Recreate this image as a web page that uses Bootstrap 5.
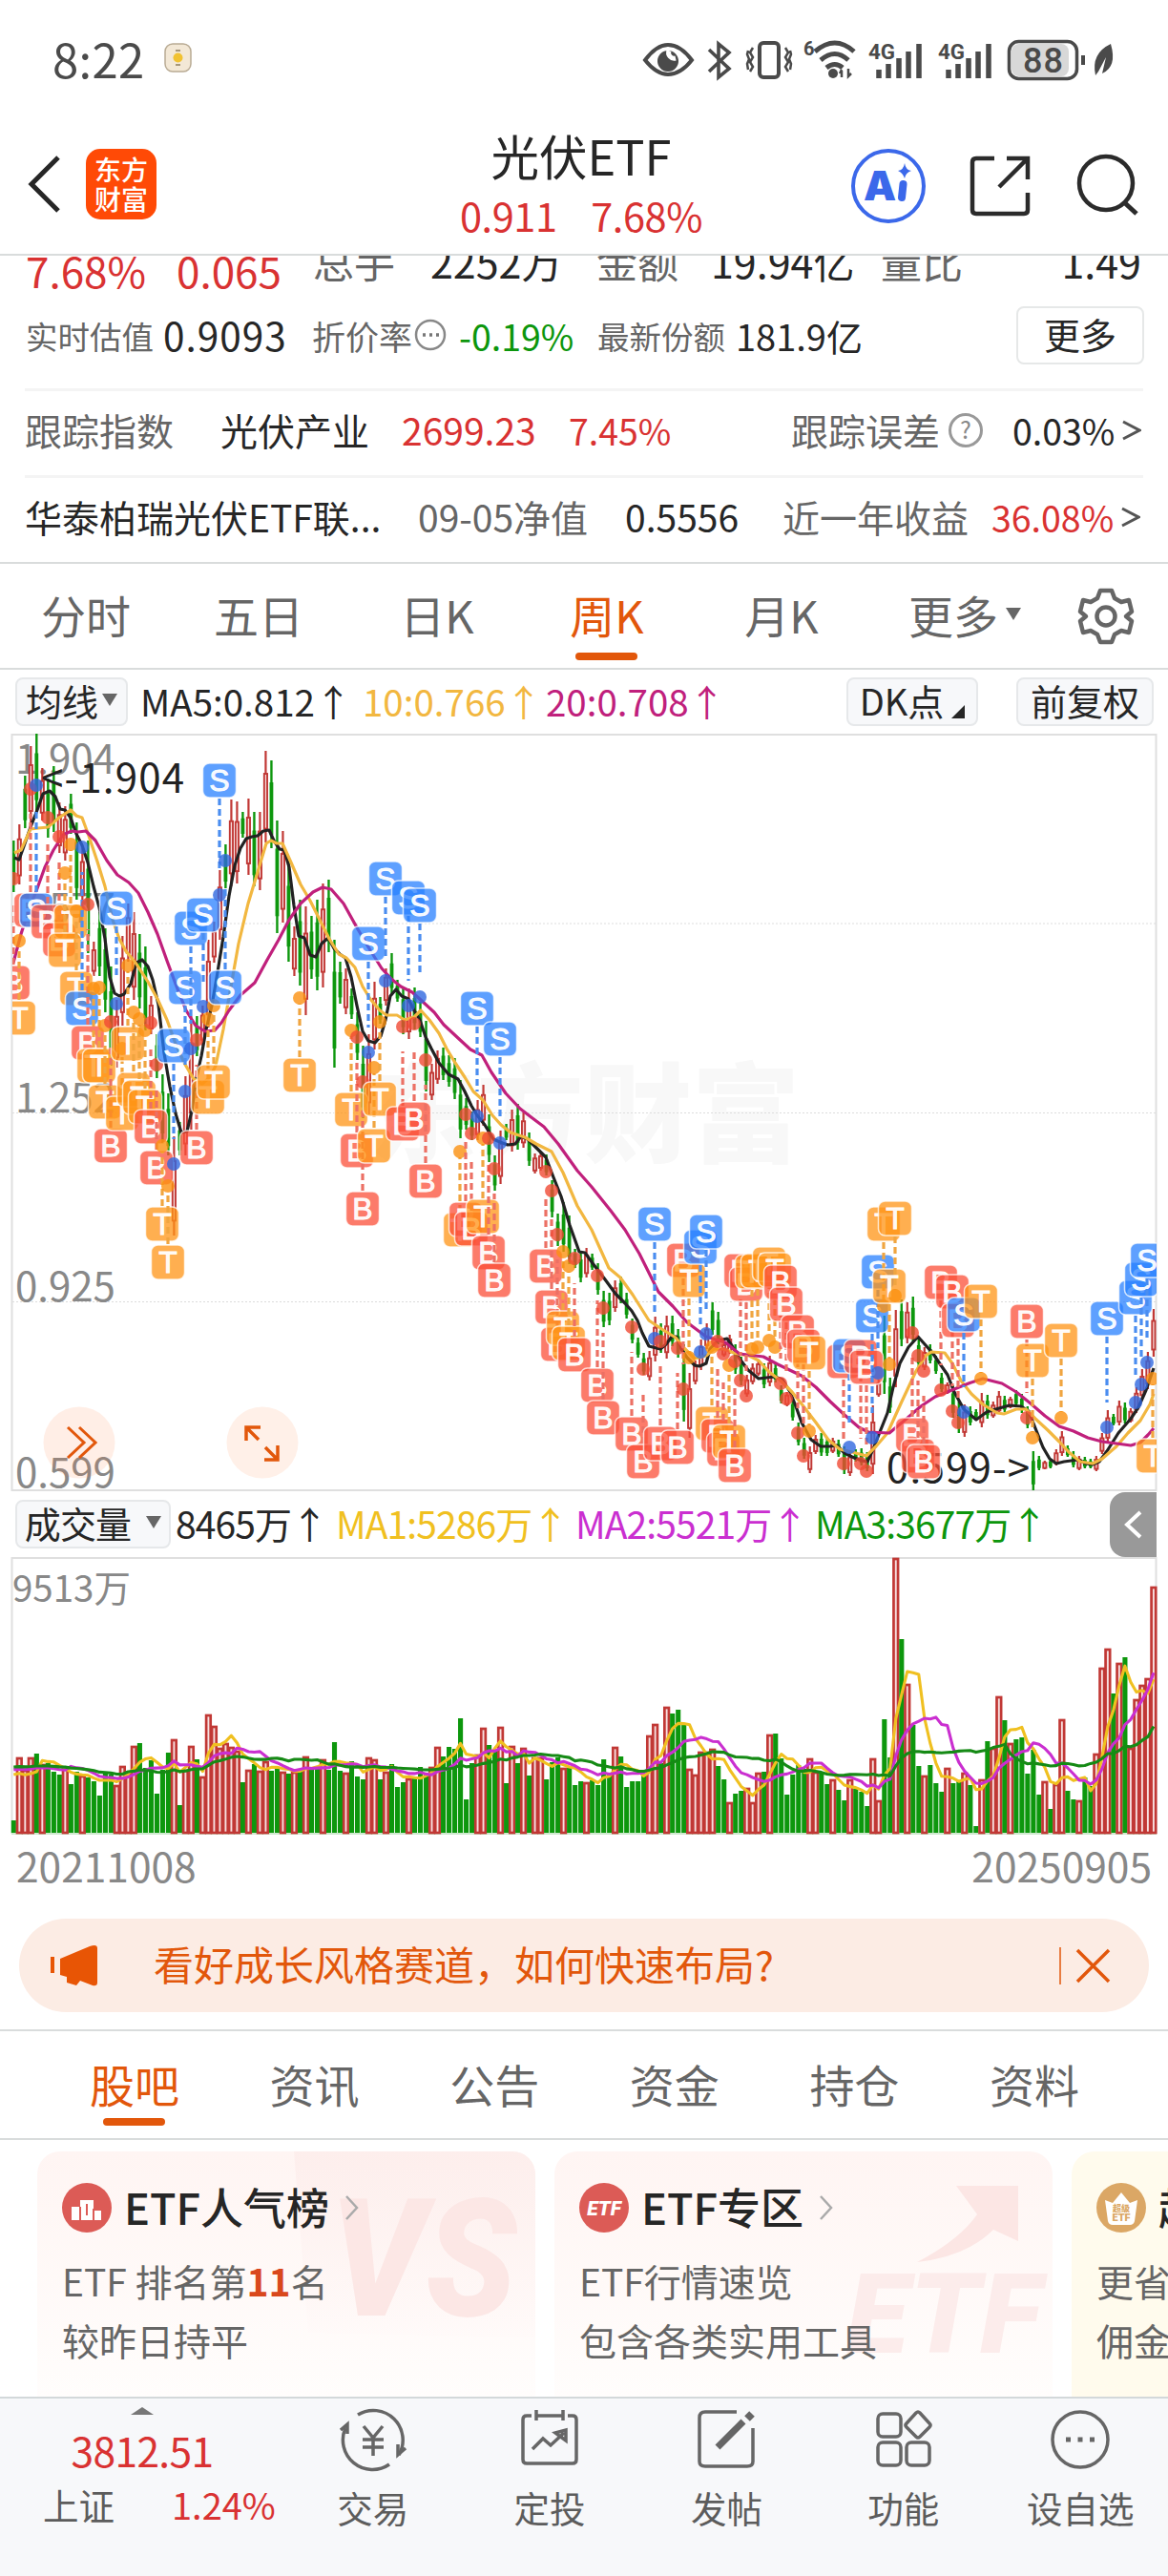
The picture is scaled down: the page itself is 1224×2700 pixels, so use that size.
<!DOCTYPE html>
<html lang="zh-CN">
<head>
    <meta charset="UTF-8">
    <meta name="viewport" content="width=device-width, initial-scale=1.0">
    <title>光伏ETF</title>
    <link rel="stylesheet" href="https://cdn.jsdelivr.net/npm/bootstrap@5.3.3/dist/css/bootstrap.min.css">
    <style>
        body {
            font-family: "Noto Sans CJK SC", "Noto Sans", sans-serif;
            color: #262626;
            font-size: 39px;
            line-height: 1;
            overflow-x: hidden;
        }
        svg { display: block; flex: none; }
        .page { width: 1224px; height: 2700px; overflow: hidden; background: #fff; }
        .red { color: #d93232; }
        .green { color: #0c960c; }
        .grey { color: #666; }
        .orange { color: #e2570b; }
        .cells { display: grid; align-items: center; white-space: nowrap; }
        .cells > * { min-width: 0; }

        .statusbar { height: 104px; padding: 20px 52px 0 55px; color: #4a4a4a; }
        .clock { font-size: 49px; letter-spacing: .3px; }
        .sys-icons { margin-top: 20px; }

        .topbar { height: 164px; border-bottom: 2px solid #d9dcdc; padding: 0 30px 0 28px; }
        .logo { width: 74px; height: 74px; border-radius: 15px; background: #ff4a06; color: #fff; font-size: 28px; line-height: 31px; font-weight: 500; }
        .topbar-title { font-size: 50.5px; line-height: 62px; padding-top: 18px; }
        .topbar-sub { font-size: 41.5px; line-height: 64px; letter-spacing: -.4px; }

        .quote { height: 139px; overflow: hidden; }
        .quote-a { height: 60px; margin-top: -27px; padding-left: 27px; font-size: 43px; grid-template-columns: 158px 143px 123px 174px 120px 178px 1fr; }
        .quote-a .change { font-size: 44px; padding-top: 20px; }
        .quote-b { height: 107px; padding: 0 0 6px 27px; grid-template-columns: 144px 156px 107px 47px 145px 145px 294px 1fr; }
        .label-s { font-size: 33.5px; }
        .more-btn { width: 134px; height: 61px; border: 2px solid #e6e8e8; border-radius: 8px; font-size: 38px; padding-bottom: 3px; }
        .fund-row { height: 91px; margin: 0 26px; padding-bottom: 7px; border-top: 3px solid #f4f4f4; }
        .fund-a { grid-template-columns: 205px 190px 175px 233px 163px 69px 115px 1fr; }
        .fund-b { grid-template-columns: 412px 217px 165px 219px 136px 1fr; }

        .period { height: 113px; border-top: 2px solid #d9dcdc; border-bottom: 2px solid #d9dcdc; font-size: 47px; grid-template-columns: 180px 182px 192px 164px 202px 182px 114px; text-align: center; color: #666; }
        .period > span { padding-bottom: 4px; }
        .tab-on { color: #e2570b; position: relative; }
        .tab-on::after { content: ""; position: absolute; left: 50%; bottom: -21px; width: 65px; height: 8px; margin-left: -33px; border-radius: 4px; background: #e2570b; }

        .chip { height: 51px; background: #f7f8fa; border: 2px solid #e6e8ea; border-radius: 8px; font-size: 38px; padding-bottom: 4px; }
        .ma-row { height: 67px; padding-left: 16px; font-size: 38.5px; grid-template-columns: 131px 233px 192px 315px 178px 1fr; }
        .ma-row > span:not(.chip), .vol-row > span:not(.chip):not(.drawer) { padding-bottom: 3px; }
        .vol-row { height: 69px; padding-left: 16px; font-size: 39px; letter-spacing: -.9px; grid-template-columns: 168px 168px 251px 251px 309px 1fr; }
        .drawer { height: 68px; width: 49px; background: #999; border-radius: 16px 0 0 16px; }
        .dates { height: 78px; padding: 0 17px 16px; font-size: 42.5px; color: #888; }

        .notice { height: 98px; margin: 9px 20px 0; border-radius: 49px; background: #fcece4; font-size: 42px; }
        .boards { height: 116px; margin-top: 18px; border-top: 2px solid #d9dcdc; border-bottom: 2px solid #d9dcdc; padding: 0 0 4px 94px; grid-template-columns: repeat(6, 188.6px); font-size: 47px; color: #666; }
        .boards .tab-on { width: 94px; }

        .promos { height: 269px; padding: 12px 0 0 39px; gap: 20px; overflow: hidden; }
        .promo { flex: none; width: 522px; height: 257px; border-radius: 24px 24px 0 0; background: linear-gradient(#fff5f3, #fffdfc); padding: 29px 26px 0; position: relative; overflow: hidden; font-size: 39px; color: #666; }
        .promo.gold { background: #fffbed; padding-left: 26px; }
        .promo > div { position: relative; white-space: nowrap; }
        .promo h2 { font-size: 45px; font-weight: 500; margin: 0 0 0 13px; padding-bottom: 3px; color: #262626; }
        .promo-line { height: 62px; line-height: 60px; }
        .promo .ghost { position: absolute; right: 0; top: 0; }

        .dock { height: 189px; border-top: 2px solid #d3d8da; background: #f7f8fa; font-size: 37.5px; color: #5c5c5c; grid-template-columns: 298px repeat(5, 185.4px); align-items: start; text-align: center; }
        .dock svg { margin: 0 auto; }
        .dock-label { padding-top: 5px; }
    </style>
</head>
<body>
<div class="page d-flex flex-column">

    <div class="statusbar d-flex align-items-start justify-content-between flex-shrink-0">
        <div class="d-flex align-items-center">
            <span class="clock pt-3">8:22</span>
            <svg class="ms-3 mt-3" width="30" height="32" viewBox="-5 0 30 32" overflow="visible"><rect x="1" y="1" width="27" height="29" rx="8" fill="#f3e8d6" stroke="#b9ab94" stroke-width="1.5"/><circle cx="14.500" cy="15.500" r="5" fill="#f1c232"/><path d="M12 8h5M12 23h5" stroke="#8d7c5c" stroke-width="1.500"/></svg>
        </div>
        <svg class="sys-icons" width="500" height="48" viewBox="672 40 500 48" fill="none" stroke="#4a4a4a" stroke-width="4">
            <path d="M676 63Q688 47 700 47Q713 47 725 63Q713 78 700 78Q688 78 676 63Z"/>
            <circle cx="700" cy="64" r="11" fill="#4a4a4a" stroke="none"/><path d="M701 53a6 6 0 0 0 7 8" stroke="#fff" stroke-width="5"/>
            <path d="M743 52L764 72L753 81V46L764 55L743 75" stroke-width="3.600"/>
            <rect x="796" y="45" width="20" height="36" rx="4"/>
            <path d="M789 50l-3 5 3 5-3 5 3 5-3 5M784 53l-1 4 2 5-2 5 1 6M823 50l3 5-3 5 3 5-3 5 3 5M828 53l1 4-2 5 2 5-1 6" stroke-width="2.500"/>
            <path d="M854 54Q875 36 895 54M860 63Q875 50 889 63M866 71Q875 64 883 71" stroke-width="5"/>
            <circle cx="873" cy="77" r="5" fill="#4a4a4a" stroke="none"/>
            <path d="M882 74v7M880 77l2-4M889 72v8l3-3" stroke-width="2.500"/>
            <path d="M921 82V73M931 82V67M942 82V61M952 82V54M963 82V46" stroke-width="5.500"/>
            <path d="M994 82V73M1004 82V67M1015 82V61M1025 82V54M1036 82V46" stroke-width="5.500"/>
            <rect x="1060" y="46" width="60" height="34" rx="8" fill="#d8d8d8" stroke="none"/>
            <rect x="1057.500" y="43.500" width="71" height="39" rx="10" stroke-width="3.500"/>
            <path d="M1135 58v10" stroke-width="4"/>
            <path d="M1148 79Q1143 56 1164 46Q1171 70 1155 77L1159 60L1151 75Z" fill="#4a4a4a" stroke="none"/>
            <g fill="#4a4a4a" stroke="none" font-size="22" font-weight="700" font-family="Roboto">
                <text x="842" y="58" font-size="20">6</text>
                <text x="910" y="62" textLength="28" lengthAdjust="spacingAndGlyphs">4G</text>
                <text x="983" y="62" textLength="28" lengthAdjust="spacingAndGlyphs">4G</text>
                <text x="1072" y="76" font-size="36" font-weight="500" textLength="42">88</text>
            </g>
        </svg>
    </div>

    <header class="topbar d-flex align-items-center justify-content-between flex-shrink-0">
        <div class="d-flex align-items-center" style="width:300px">
            <svg class="mt-3" width="38" height="64" viewBox="0 0 38 64"><path d="M33 4L5 32L33 60" fill="none" stroke="#262626" stroke-width="5"/></svg>
            <div class="logo mt-3 ms-4 d-flex flex-column justify-content-center text-center"><span>东方</span><span>财富</span></div>
        </div>
        <div class="text-center">
            <div class="topbar-title">光伏ETF</div>
            <div class="topbar-sub red">0.911&nbsp;&nbsp; &nbsp;7.68%</div>
        </div>
        <svg class="mt-3" width="304" height="84" viewBox="888 151 304 84" fill="none" stroke="#2b2b2b" stroke-width="4.500">
            <circle cx="929" cy="195" r="37" stroke="#3b68ea" stroke-width="4"/>
            <text x="903" y="210" font-size="43" font-weight="900" fill="#3b68ea" stroke="none" font-family="Inter">A</text>
            <path d="M944.500 193L943 207" stroke="#3b68ea" stroke-width="8" stroke-linecap="round"/>
            <path d="M946 171q1 7 7 8q-6 2-7 8q-2-6-7-8q6-1 7-8Z" fill="#3b68ea" stroke="none"/>
            <path d="M1040 166H1021Q1017 166 1017 170V220Q1017 224 1021 224H1071Q1075 224 1075 220V202M1045 196L1074 167M1053 166H1075V188"/>
            <circle cx="1157" cy="192" r="28"/><path d="M1176 212L1189 224" stroke-width="5"/>
        </svg>
    </header>

    <section class="quote flex-shrink-0">
        <div class="quote-a cells">
            <span class="change red">7.68%</span><span class="change red">0.065</span>
            <span class="grey">总手</span><span>2252万</span>
            <span class="grey">金额</span><span>19.94亿</span>
            <span class="d-flex justify-content-between pe-4"><span class="grey">量比</span><span class="pe-1">1.49</span></span>
        </div>
        <div class="quote-b cells">
            <span class="grey label-s">实时估值</span><span style="font-size:40.5px;letter-spacing:1px">0.9093</span>
            <span class="grey" style="font-size:35px">折价率</span>
            <svg width="36" height="36" viewBox="0 0 36 36"><circle cx="17" cy="17" r="15" fill="none" stroke="#888" stroke-width="2.500"/><path d="M9 17h3M16 17h3M23 17h3" stroke="#777" stroke-width="3.500"/></svg>
            <span class="green" style="font-size:37.500px">-0.19%</span>
            <span class="grey label-s">最新份额</span><span style="font-size:38px">181.9亿</span>
            <span class="more-btn d-flex align-items-center justify-content-center">更多</span>
        </div>
    </section>

    <section class="flex-shrink-0">
        <div class="fund-row fund-a cells">
            <span class="grey">跟踪指数</span><span>光伏产业</span><span class="red">2699.23</span><span class="red" style="font-size:37.500px">7.45%</span>
            <span class="grey">跟踪误差</span>
            <svg width="40" height="40" viewBox="0 0 40 40"><circle cx="20" cy="20" r="16.500" fill="none" stroke="#999" stroke-width="3"/><text x="20" y="29" text-anchor="middle" font-size="25" fill="#888">?</text></svg>
            <span style="font-size:37.500px">0.03%</span>
            <svg width="20" height="22" viewBox="0 0 20 22"><path d="M1 2L18 11L1 20" fill="none" stroke="#555" stroke-width="3"/></svg>
        </div>
        <div class="fund-row fund-b cells">
            <span>华泰柏瑞光伏ETF联...</span><span class="grey">09-05净值</span><span>0.5556</span>
            <span class="grey">近一年收益</span><span class="red" style="font-size:37.500px">36.08%</span>
            <svg width="20" height="22" viewBox="0 0 20 22"><path d="M1 2L18 11L1 20" fill="none" stroke="#555" stroke-width="3"/></svg>
        </div>
    </section>

    <nav class="period cells flex-shrink-0">
        <span>分时</span><span>五日</span><span>日K</span><span class="tab-on">周K</span><span>月K</span>
        <span class="d-flex align-items-center justify-content-center">更多<svg class="ms-2" width="16" height="14" viewBox="0 0 16 14"><path d="M0 0H16L8 13Z" fill="#666"/></svg></span>
        <svg class="mx-auto" width="60" height="60" viewBox="-30 -30 60 60" fill="none" stroke="#666" stroke-width="4.500" stroke-linejoin="round"><path d="M-6-27H6L9-19L16-15L24-17L27-5L21 0L27 5L24 17L16 15L9 19L6 27H-6L-9 19L-16 15L-24 17L-27 5L-21 0L-27-5L-24-17L-16-15L-9-19Z"/><circle r="9.500"/></svg>
    </nav>

    <div class="ma-row cells flex-shrink-0">
        <span class="chip d-flex align-items-center justify-content-center" style="width:118px">均线<svg class="ms-1" width="16" height="14" viewBox="0 0 16 14"><path d="M0 0H16L8 13Z" fill="#666"/></svg></span>
        <span>MA5:0.812↑</span><span style="color:#f2b740">10:0.766↑</span><span style="color:#c0207c">20:0.708↑</span>
        <span class="chip d-flex align-items-center justify-content-center" style="width:138px">DK点<svg class="ms-2 mt-4" width="14" height="14" viewBox="0 0 14 14"><path d="M14 0V14H0Z" fill="#262626"/></svg></span>
        <span class="chip d-flex align-items-center justify-content-center" style="width:144px">前复权</span>
    </div>

    <svg id="kline" class="flex-shrink-0" width="1224" height="794" viewBox="0 0 1224 794"></svg>

    <div class="vol-row cells flex-shrink-0">
        <span class="chip d-flex align-items-center justify-content-center" style="width:163px">成交量<svg class="ms-3" width="16" height="14" viewBox="0 0 16 14"><path d="M0 0H16L8 13Z" fill="#666"/></svg></span>
        <span>8465万↑</span><span style="color:#f0c020">MA1:5286万↑</span><span style="color:#ca2fd0">MA2:5521万↑</span><span class="green">MA3:3677万↑</span>
        <span class="drawer d-flex align-items-center justify-content-center"><svg width="20" height="32" viewBox="0 0 20 32"><path d="M17 3L3 16L17 29" fill="none" stroke="#fff" stroke-width="4"/></svg></span>
    </div>

    <svg id="volume" class="flex-shrink-0" width="1224" height="292" viewBox="0 0 1224 292"></svg>

    <div class="dates d-flex align-items-center justify-content-between flex-shrink-0"><span>20211008</span><span>20250905</span></div>

    <div class="notice orange d-flex align-items-center flex-shrink-0">
        <svg width="141" height="98" viewBox="0 0 141 98"><path d="M33 40h4v17h-4zM43 42L74 29Q82 26 82 31V67Q82 71 77 70L64 65L60 70L50 67V61L43 59Z" fill="#e85505"/></svg>
        <span class="flex-grow-1 pb-1">看好成长风格赛道，如何快速布局?</span>
        <svg width="94" height="98" viewBox="0 0 94 98" fill="none" stroke="#e2570b"><path d="M1 30V69" stroke-width="1.500"/><path d="M19 33L52 66M52 33L19 66" stroke-width="3.500"/></svg>
    </div>

    <nav class="boards cells flex-shrink-0">
        <span class="tab-on">股吧</span><span>资讯</span><span>公告</span><span>资金</span><span>持仓</span><span>资料</span>
    </nav>

    <section class="promos d-flex flex-shrink-0">
        <div class="promo">
            <svg class="ghost" width="260" height="257" viewBox="0 0 260 257"><defs><linearGradient id="fade" x2="0" y2="1"><stop stop-color="#fdeeec"/><stop offset="1" stop-color="#fffaf9"/></linearGradient></defs><path d="M7 0H260V195L22 190Z" fill="url(#fade)"/><text x="45" y="172" font-size="172" font-weight="900" font-style="italic" font-family="Roboto" fill="#fce7e5" textLength="195" lengthAdjust="spacingAndGlyphs">VS</text></svg>
            <div class="d-flex align-items-center">
                <svg width="52" height="60" viewBox="0 0 52 60"><circle cx="26" cy="30" r="26" fill="#dc5b56"/><path d="M10 29h9V22h14v11h8V43H10Z" fill="#fff"/><path d="M26 26v12M19 29v14M33 31v12" stroke="#dc5b56" stroke-width="2"/></svg>
                <h2>ETF人气榜</h2>
                <svg class="ms-3" width="16" height="28" viewBox="0 0 16 28"><path d="M2 2L13 14L2 26" fill="none" stroke="#aaa" stroke-width="2.500"/></svg>
            </div>
            <div class="promo-line mt-3">ETF 排名第<b style="color:#d9481c">11</b>名</div>
            <div class="promo-line">较昨日持平</div>
        </div>
        <div class="promo">
            <svg class="ghost" width="230" height="257" viewBox="0 0 230 257"><path d="M88 116Q132 93 151 66L129 36H194V94L168 82Q140 110 88 116Z" fill="#fce6e4"/><text x="14" y="211" font-size="116" font-weight="900" font-style="italic" font-family="Roboto" fill="#fceceb" textLength="204" lengthAdjust="spacingAndGlyphs">ETF</text></svg>
            <div class="d-flex align-items-center">
                <svg width="52" height="60" viewBox="0 0 52 60"><circle cx="26" cy="30" r="26" fill="#dc5b56"/><text x="26" y="38" text-anchor="middle" font-size="21" font-weight="900" font-style="italic" font-family="Roboto" fill="#fff">ETF</text></svg>
                <h2>ETF专区</h2>
                <svg class="ms-3" width="16" height="28" viewBox="0 0 16 28"><path d="M2 2L13 14L2 26" fill="none" stroke="#aaa" stroke-width="2.500"/></svg>
            </div>
            <div class="promo-line mt-3">ETF行情速览</div>
            <div class="promo-line">包含各类实用工具</div>
        </div>
        <div class="promo gold">
            <div class="d-flex align-items-center">
                <svg width="52" height="60" viewBox="0 0 52 60"><circle cx="26" cy="30" r="26" fill="#dba765"/><path d="M9 22L17 25L26 14L35 25L43 22L40 44Q39 48 35 48H17Q13 48 12 44Z" fill="#fff"/><g fill="#dba765" text-anchor="middle" font-weight="900"><text x="26" y="34" font-size="9">超级</text><text x="26" y="44" font-size="11" font-family="Roboto">ETF</text></g></svg>
                <h2>超级</h2>
            </div>
            <div class="promo-line mt-3">更省</div>
            <div class="promo-line">佣金</div>
        </div>
    </section>

    <footer class="dock cells flex-shrink-0">
        <div>
            <svg width="24" height="20" viewBox="0 0 24 20"><path d="M0 17L12 9L24 17Z" fill="#777"/></svg>
            <div class="red" style="padding-top:13px;font-size:42.500px;letter-spacing:-.6px">3812.51</div>
            <div class="d-flex mt-3" style="padding-left:45px"><span style="width:135px" class="text-start">上证</span><span class="red" style="font-size:38px">1.24%</span></div>
        </div>
        <div>
            <svg width="84" height="90" viewBox="-42 -43 84 90" fill="none" stroke="#666" stroke-width="3.500"><path d="M-16-26A31 31 0 0 1 27 16M17 26A31 31 0 0 1-29-12"/><path d="M-34-10L-27-16V-6M34 9L26 16V5"/><path d="M-10-14L0-2L10-14M0-2V17M-11 0H11M-11 8H11"/></svg>
            <div class="dock-label">交易</div>
        </div>
        <div>
            <svg width="84" height="90" viewBox="-42 -43 84 90" fill="none" stroke="#666" stroke-width="3.500"><path d="M-19-25H-24Q-28-25-28-21V21Q-28 25-24 25H24Q28 25 28 21V-21Q28-25 24-25H19M-14-31V-20M14-31V-20M-14-25H14"/><path d="M-18 10L-7-1L1 6L15-7M6-7L17-10V1Z"/></svg>
            <div class="dock-label">定投</div>
        </div>
        <div>
            <svg width="84" height="90" viewBox="-42 -43 84 90" fill="none" stroke="#666" stroke-width="3.500"><path d="M11-29H-22Q-28-29-28-23V23Q-28 28-22 28H22Q28 28 28 23V-12"/><path d="M-9 8L18-19" stroke-width="7"/><path d="M22-22L27-27" stroke-width="8"/></svg>
            <div class="dock-label">发帖</div>
        </div>
        <div>
            <svg width="84" height="90" viewBox="-42 -43 84 90" fill="none" stroke="#666" stroke-width="3.500"><rect x="-27" y="-27" width="24" height="24" rx="5"/><rect x="-27" y="3" width="24" height="24" rx="5"/><rect x="3" y="3" width="24" height="24" rx="5"/><path d="M13-28Q15-30 17-28L27-17Q29-15 27-13L17-3Q15-1 13-3L3-13Q1-15 3-17Z"/></svg>
            <div class="dock-label">功能</div>
        </div>
        <div>
            <svg width="84" height="90" viewBox="-42 -43 84 90" fill="none" stroke="#666" stroke-width="3.500"><circle r="29"/><path d="M-15 0h5M-2.500 0h5M10 0h5" stroke-width="5"/></svg>
            <div class="dock-label">设自选</div>
        </div>
    </footer>
</div>

<script src="https://cdn.jsdelivr.net/npm/bootstrap@5.3.3/dist/js/bootstrap.bundle.min.js"></script>
<script>
    const RED = '#c13835', GREEN = '#0d970d';
    const barX = i => 14.3 + i * 6.003;

    // weekly candles: colour, high, low
    const candles = `g112,166 r95,158 g44,99 r13,93 g0,82 r36,91 g47,109 g34,103 r72,125 r76,133 g63,105 g93,174 r120,178 g112,230 r218,254 g187,254 g204,292 g244,348 r279,350 r212,306
r178,239 r187,279 g210,288 g223,311 r275,315 g315,361 g357,430 g377,442 r422,526 g407,442 r359,442 r296,415 g296,338 r285,327 r216,308 r197,240 r143,216 g116,162 r69,160 r71,157
g82,109 r68,148 g82,160 r82,164 r18,114 g28,120 g91,209 r102,198 g133,239 r202,254 g174,264 r181,295 g191,257 g174,269 r157,266 g153,229 g216,350 g239,283 r246,294 g267,299
g292,342 g327,403 r315,399 r260,331 g276,304 r246,285 g230,273 g258,281 g266,315 r267,320 g266,310 g281,318 g301,375 r346,384 r332,367 g329,363 g337,370 g340,383 g363,424 g382,415
g396,426 r384,426 r368,411 g399,449 g442,479 r416,472 g409,426 r394,438 g388,436 r397,434 g418,453 r440,461 r438,458 g441,463 g468,507 g503,537 g491,543 g505,556 g540,560 g543,575
r539,570 g545,562 g555,588 g584,622 g586,620 r573,606 g569,597 g586,613 g613,639 g633,654 g649,672 r647,678 r611,658 g618,649 r610,655 g610,642 g624,654 g640,721 r670,738 r657,682
r635,667 r618,645 g596,630 g606,640 r637,653 r630,650 g640,671 g653,683 r672,695 r660,682 r657,673 g660,686 r652,684 g660,680 g683,702 r690,705 g697,720 g722,746 g738,760 r747,775
r735,755 g733,757 g737,757 r738,754 g740,758 g747,776 r752,778 g750,763 g749,767 g753,773 r704,776 r677,695 g610,692 g675,712 r604,685 g593,642 r596,639 g590,637 g633,665 r643,667
g640,660 g652,671 g670,690 r680,692 g683,717 g700,733 r703,737 g705,725 g708,720 r691,727 g693,718 r700,717 r689,713 g694,711 r695,707 g688,705 g692,712 g705,728 g752,793 g757,772
r762,771 g760,770 r750,767 r731,757 g746,758 g752,769 r757,772 g758,770 g760,770 r757,773 r733,755 r709,743 g713,725 r699,725 g701,723 r707,722 r685,712 r666,698 r648,687 r603,653`.split(/\s+/);

    const ma5 = '15,130 20,132 25,118 32,98 39,80 45,63 52,60 58,66 63,79 68,80 74,88 80,105 86,117 92,135 98,160 104,182 110,215 115,255 120,272 125,275 130,273 137,262 143,240 149,237 155,244 160,258 166,284 172,335 178,370 184,398 190,418 196,417 201,395 206,360 211,338 216,310 222,285 228,250 234,213 240,170 246,138 252,120 258,110 264,108 270,107 276,102 282,101 287,112 293,121 298,122 303,140 308,180 313,212 319,214 325,232 331,234 337,220 344,214 350,225 356,231 362,235 368,255 374,285 380,312 386,322 393,324 399,317 404,300 409,275 415,268 421,275 428,278 434,290 440,300 446,318 452,330 460,345 470,357 480,362 487,375 494,390 500,400 508,410 517,425 524,428 532,431 540,430 546,422 553,425 560,432 572,444 580,465 588,485 597,515 607,543 613,544 621,555 634,572 645,587 655,597 662,605 668,615 673,628 680,642 692,645 698,640 704,632 709,632 714,645 720,654 728,662 733,663 740,660 744,645 752,636 762,634 768,643 775,655 784,667 795,676 803,675 812,674 820,677 828,690 834,705 840,722 850,740 860,747 870,747 877,746 885,754 893,758 903,762 909,763 915,750 922,732 930,712 936,685 943,660 952,643 962,632 970,641 978,650 986,662 993,672 1000,690 1010,708 1023,719 1034,711 1047,707 1058,704 1070,705 1078,710 1085,728 1093,748 1100,760 1107,765 1115,763 1130,761 1138,765 1145,766 1152,763 1160,752 1172,733 1185,718 1193,706 1201,688 1209,665';
    const ma10 = '15,125 22,122 32,100 40,99 50,98 62,88 74,80 80,86 86,88 93,107 102,134 110,160 118,195 125,215 132,228 142,240 155,260 165,278 175,300 184,325 193,345 203,362 212,367 220,360 226,348 234,310 242,265 250,220 260,178 270,145 279,115 284,112 290,115 296,115 305,135 315,158 325,175 335,195 345,215 355,231 363,235 372,245 380,265 388,278 398,290 405,295 416,295 424,300 434,297 441,290 450,300 460,314 468,330 477,345 487,360 496,375 506,384 516,400 525,410 535,418 550,423 562,430 578,438 590,460 605,495 620,520 638,560 650,570 663,588 680,615 695,625 708,633 718,645 728,655 740,652 748,645 758,645 772,650 785,652 795,657 806,669 818,678 830,690 842,705 855,722 868,740 880,750 893,753 908,757 918,747 930,733 945,700 960,668 970,652 976,648 990,649 998,660 1007,678 1018,692 1030,703 1045,712 1052,713 1065,708 1075,708 1085,718 1098,730 1110,742 1120,753 1132,763 1145,765 1155,760 1170,747 1182,733 1195,720 1205,703 1209,692';
    const ma20 = '14,240 22,210 30,185 38,165 47,140 56,122 66,106 75,102 82,103 90,102 100,112 112,133 123,148 135,156 145,167 155,187 165,210 175,238 185,265 195,290 205,306 215,312 225,311 232,303 240,290 252,274 267,261 280,237 292,216 303,195 315,178 328,166 338,161 347,163 360,178 375,205 388,227 400,246 410,257 420,265 432,271 442,280 455,292 465,305 480,319 493,331 505,337 515,355 530,377 545,393 558,403 570,412 585,430 605,458 620,475 640,500 655,520 670,545 690,585 705,600 720,617 740,632 760,638 775,650 800,653 815,661 840,673 855,685 870,700 885,714 900,727 910,732 932,733 950,718 965,705 980,695 1000,687 1015,681 1030,676 1050,681 1065,690 1080,702 1095,715 1110,726 1125,731 1140,738 1155,742 1185,746 1195,743 1203,735 1209,728';

    // trade signals: letter + x, badge y, dot y
    const signals = `B14,261,152 B32,185,58 T20,298,217 S38,185,54 B50,197,88 B62,216,108 T74,197,116 T68,227,146 T80,267,186 S86,288,119 B92,324,179 T98,348,267 T104,348,266 T110,386,306 B116,432,302 S122,183,283
T128,398,330 T134,325,243 T140,373,292 T146,381,299 T152,391,311 B158,412,303 B164,455,347 T170,514,432 T176,554,474 S182,327,451 S194,266,375 S200,204,330 B206,434,321 S213,190,286 T218,381,299 T224,365,285 S230,49,169 S236,266,133
T314,358,277 T368,394,311 B374,437,318 B380,498,365 S386,220,334 T392,432,350 T398,383,302 S404,152,259 B422,409,307 S428,172,285 B434,404,304 S440,180,276 B446,469,342 T482,520,438 B488,509,399 B494,519,419
S500,288,401 T506,506,424 B512,544,424 B518,573,456 S524,320,429 B572,558,459 B578,601,479 B584,640,525 T590,623,543 T596,639,558 B602,651,550 B626,683,568 B632,717,602 B662,734,622 B674,763,666
S686,514,634 B692,744,637 B710,748,644 B716,552,687 T722,573,654 S734,538,648 S740,522,629 T746,723,643 B752,736,637 B758,750,650 T764,742,662 B770,767,658 B776,563,678 B782,577,694 T788,564,645 T794,563,643
T806,556,636 T812,562,643 B818,575,681 B824,598,697 B836,627,733 B842,642,757 T848,649,731 B884,658,765 S890,652,748 B902,653,765 B908,664,773 S914,610,738 S920,564,670 T926,514,600 T932,579,661 T938,508,589
B956,735,628 B962,757,652 B968,763,668 B986,575,688 B998,585,710 B1004,615,722 S1010,609,711 T1028,595,676 B1076,616,717 T1082,657,738 T1112,636,717 S1160,613,727 S1190,591,701 S1196,572,682 S1202,552,659 T1208,757,676`.split(/\s+/);

    const badge = { S: ['#2880ff', '#4a8df0', '#2f68e0'], T: ['#ff9416', '#f0a540', '#fb9110'], B: ['#fb4f38', '#ec7064', '#f04a34'] };

    function drawKline() {
        let s = '<clipPath id="box"><rect x="13" y="0" width="1199" height="794"/></clipPath>';
        s += '<text x="386" y="440" font-size="113" font-weight="900" fill="#f8f8f8">东方财富</text>';
        for (const y of [199, 397.5, 595.5]) s += `<path d="M13 ${y}H1211" stroke="#dcdcdc" stroke-dasharray="2 2"/>`;
        s += '<rect x="12.500" y="1" width="1199" height="792" fill="none" stroke="#dfdfdf" stroke-width="2"/>';
        [['1.904', 42], ['1.577', 198], ['1.252', 397], ['0.925', 595], ['0.599', 790]].forEach(l => {
            s += `<text x="16" y="${l[1]}" font-size="42" fill="#888">${l[0]}</text>`;
        });
        s += '<g clip-path="url(#box)">';
        candles.forEach((c, i) => {
            const [hi, lo] = c.slice(1).split(',').map(Number), x = barX(i), h = lo - hi;
            const top = hi + h * .25, bot = lo - h * .15;
            if (c[0] === 'r') {
                s += `<path d="M${x} ${hi}V${lo}" stroke="${RED}" stroke-width="2.2"/><rect x="${x - 1.6}" y="${top}" width="3.2" height="${bot - top}" fill="#f6dcdc" stroke="${RED}" stroke-width="1.9"/>`;
            } else {
                s += `<path d="M${x} ${hi}V${lo}" stroke="${GREEN}" stroke-width="2.4"/><path d="M${x} ${top}V${bot}" stroke="${GREEN}" stroke-width="3.8"/>`;
            }
        });
        [[ma5, '#222'], [ma10, '#f2b740'], [ma20, '#c0207c']].forEach(m => {
            s += `<polyline points="${m[0]}" fill="none" stroke="${m[1]}" stroke-width="3.2" stroke-linejoin="round"/>`;
        });
        s += '<g fill="#222" font-size="42"><text x="43" y="62" textLength="150">&lt;-1.904</text><text x="929" y="785" textLength="150">0.599-&gt;</text></g>';
        signals.forEach(v => {
            const k = v[0], [x, y, dot] = v.slice(1).split(',').map(Number), c = badge[k];
            const dir = dot > y ? 1 : -1, gap = k === 'T' ? 6 : 26;
            s += `<path d="M${x} ${y + dir * 19}V${dot - dir * gap}" stroke="${c[1]}" stroke-width="3.2" stroke-dasharray="7 4"/>`;
            s += `<circle cx="${x}" cy="${dot}" r="7" fill="${c[2]}" fill-opacity=".8"/>`;
            s += `<rect x="${x - 17.500}" y="${y - 18}" width="35" height="36" rx="7" fill="${c[0]}" fill-opacity=".75" stroke="#fff" stroke-opacity=".75" stroke-width="1.5"/>`;
            s += `<text x="${x}" y="${y + 11}" text-anchor="middle" font-family="Liberation Sans" font-size="32" fill="#fff" stroke="#fff" stroke-width=".9" fill-opacity=".95">${k}</text>`;
        });
        s += '</g>';
        s += '<g fill="none" stroke="#e2570b" stroke-width="3"><circle cx="83" cy="743" r="37.500" fill="#ff7f3f" fill-opacity=".13" stroke="none"/><path d="M71 727L88 743L71 759M83 727L100 743L83 759"/>';
        s += '<circle cx="275" cy="743" r="37.500" fill="#fff0e8" stroke="none"/><path d="M258 741V727H273M258 727L271 740M277 761H291V746M291 761L278 748" stroke-width="3.500"/></g>';
        document.getElementById('kline').innerHTML = s;
    }

    // weekly volume: colour + bar height
    const volumes = `g13 r79 r66 r79 g83 r72 g73 g64 g61 r68 g51 g64 r60 g58 g54 g39 g64 g61 r50 r70 r64 r91 g94 g68 g76 g41 g66 g84 r98 g29 r66 r91 g77 r59 r124 r112 r89 r94 r90 r86
g53 r66 g72 r65 r75 g65 g67 r64 g62 r64 g66 r80 g66 g70 r77 g66 g95 g65 r63 g75 g59 g56 r79 r77 g56 r64 g72 g48 g53 r57 g59 g69 g61 r69 r90 g80 g90 g88 g120 g35
g73 r82 r110 g92 g86 r111 g52 r91 g73 r89 g60 r79 r79 g56 g74 g79 r68 g68 g50 g54 r53 g55 g50 g77 g61 r90 g80 g48 g54 g54 g61 r102 r114 g73 r132 g125 g129 g113 r67 r61
r85 r85 r88 g70 g56 r32 g41 g44 r47 r32 r63 g64 r103 g104 g78 g40 g61 g71 g67 r78 r64 g64 g51 r56 g45 g34 r56 g46 g43 g28 r78 r34 g119 g79 r288 g203 r156 g113 g70 r60
g71 g52 g43 r68 g52 g54 r63 g50 g7 r56 g96 r89 r143 g118 r94 g98 g100 g62 g87 g40 r54 g25 r51 r119 g44 g35 r34 g58 g49 r83 r173 r193 g146 r178 g184 r89 r140 r155 r162 r258`.split(/\s+/);

    function average(list, n, pad) {
        return list.map((v, i) => {
            let sum = 0;
            for (let k = i - n + 1; k <= i; k++) sum += k < 0 ? pad : list[k];
            return `${barX(i)},${289 - sum / n}`;
        }).join(' ');
    }

    function drawVolume() {
        const h = volumes.map(v => Number(v.slice(1)));
        let s = '<path d="M12.500 290V1H1211.500V290" fill="none" stroke="#dfdfdf" stroke-width="2"/><path d="M12 290H1212" stroke="#cfe9cf" stroke-width="2"/>';
        s += '<text x="13" y="47" font-size="38.500" fill="#888">9513万</text>';
        h.forEach((v, i) => {
            const x = barX(i);
            s += volumes[i][0] === 'r'
                ? `<rect x="${x - 2.300}" y="${290 - v}" width="4.600" height="${v - 1}" fill="#f7dfdf" stroke="${RED}" stroke-width="2.700"/>`
                : `<rect x="${x - 2.500}" y="${289 - v}" width="5.100" height="${v}" fill="${GREEN}"/>`;
        });
        [[5, '#f0c020', 73], [10, '#ca2fd0', 72], [20, '#158a15', 72]].forEach(m => {
            s += `<polyline points="${average(h, m[0], m[2])}" fill="none" stroke="${m[1]}" stroke-width="3.100" stroke-linejoin="round"/>`;
        });
        document.getElementById('volume').innerHTML = s;
    }

    drawKline();
    drawVolume();
</script>
</body>
</html>
